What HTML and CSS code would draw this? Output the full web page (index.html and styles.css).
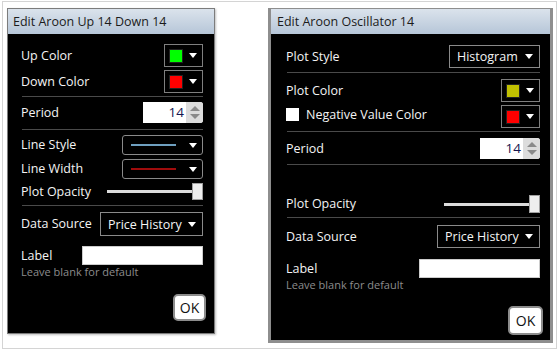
FILE: index.html
```html
<!DOCTYPE html>
<html lang="en">
<head>
    <meta charset="UTF-8">
    <title>Aroon dialogs</title>
    <link rel="stylesheet" href="styles.css">
</head>
<body>
<div class="screen">
    <div class="dialog dlg-left">
        <div class="titlebar">Edit Aroon Up 14 Down 14</div>
        <div class="body">
            <div class="row h23 mt10">
                <span class="lbl">Up Color</span>
                <div class="swatch"><i class="chip" style="background:#00ff00"></i><b class="caret"></b></div>
            </div>
            <div class="row h23 mt3">
                <span class="lbl">Down Color</span>
                <div class="swatch"><i class="chip" style="background:#ff0000"></i><b class="caret"></b></div>
            </div>
            <div class="sep mt3"></div>
            <div class="row h21 mt5">
                <span class="lbl">Period</span>
                <div class="spin"><span class="num">14</span><span class="arrows"><b class="up"></b><b class="down"></b></span></div>
            </div>
            <div class="sep mt6"></div>
            <div class="row h20 mt5">
                <span class="lbl">Line Style</span>
                <div class="linepick"><i class="stroke" style="background:#6e9fbf"></i><b class="caret"></b></div>
            </div>
            <div class="row h20 mt4">
                <span class="lbl">Line Width</span>
                <div class="linepick"><i class="stroke" style="background:#a00c0c"></i><b class="caret"></b></div>
            </div>
            <div class="row h17 mt4">
                <span class="lbl">Plot Opacity</span>
                <div class="slider"><span class="track"></span><span class="thumb"></span></div>
            </div>
            <div class="sep mt5"></div>
            <div class="row h24 mt6">
                <span class="lbl">Data Source</span>
                <div class="select w102"><span>Price History</span><b class="caret"></b></div>
            </div>
            <div class="row h19 mt10">
                <span class="lbl">Label</span>
                <div class="textbox w120"></div>
            </div>
            <div class="hint">Leave blank for default</div>
            <div class="foot mt16"><button class="ok">OK</button></div>
        </div>
    </div>

    <div class="dialog dlg-right">
        <div class="titlebar">Edit Aroon Oscillator 14</div>
        <div class="body">
            <div class="row h23 mt11">
                <span class="lbl">Plot Style</span>
                <div class="select w90"><span>Histogram</span><b class="caret"></b></div>
            </div>
            <div class="sep mt4"></div>
            <div class="row h23 mt6">
                <span class="lbl">Plot Color</span>
                <div class="swatch"><i class="chip" style="background:#c0c000"></i><b class="caret"></b></div>
            </div>
            <div class="row h23 mt3">
                <span class="lbl raised"><span class="check"></span>Negative Value Color</span>
                <div class="swatch"><i class="chip" style="background:#ff0000"></i><b class="caret"></b></div>
            </div>
            <div class="sep mt3"></div>
            <div class="row h21 mt6">
                <span class="lbl">Period</span>
                <div class="spin"><span class="num">14</span><span class="arrows"><b class="up"></b><b class="down"></b></span></div>
            </div>
            <div class="sep mt5"></div>
            <div class="row h18 mt30">
                <span class="lbl">Plot Opacity</span>
                <div class="slider"><span class="track"></span><span class="thumb"></span></div>
            </div>
            <div class="sep mt4"></div>
            <div class="row h23 mt7">
                <span class="lbl">Data Source</span>
                <div class="select w102"><span>Price History</span><b class="caret"></b></div>
            </div>
            <div class="row h19 mt11">
                <span class="lbl">Label</span>
                <div class="textbox w120"></div>
            </div>
            <div class="hint">Leave blank for default</div>
            <div class="foot mt15"><button class="ok big">OK</button></div>
        </div>
    </div>
</div>
</body>
</html>
```

FILE: styles.css
```css
*{
    margin: 0;
    padding: 0;
    box-sizing: border-box;
}
body{
    background: #fff;
    font-family: "Open Sans", "Noto Sans", sans-serif;
    font-size: 12.5px;
}
.screen{
    width: 555px;
    height: 348px;
    margin: 1px 0 0 2px;
    border: solid 1px #d4d4d4;
    display: flex;
    align-items: flex-start;
    padding: 6px 0 0 4px;
}
.dialog{
    background: #000;
    display: flex;
    flex-direction: column;
}
.dlg-left{
    width: 208px;
    height: 326px;
    border: solid 1px #7c7c7c;
    box-shadow: 1px 1px 2px rgba(0,0,0,.25);
}
.dlg-right{
    width: 285px;
    height: 335px;
    margin-left: 53px;
    border: solid 3px #8e8e8e;
    border-top-width: 1px;
}
.titlebar{
    height: 25px;
    line-height: 25px;
    padding-left: 5px;
    color: #1b1b1b;
    font-size: 12.5px;
    background: linear-gradient(#dbe3ec, #b6c6d8);
    white-space: nowrap;
}
.dlg-right .titlebar{
    padding-left: 6px;
}
.body{
    flex: 1;
    padding: 0 11px 0 13px;
    display: flex;
    flex-direction: column;
}
.dlg-right .body{
    padding: 0 10px 0 15px;
}
.row{
    display: flex;
    align-items: center;
    justify-content: space-between;
    color: #f4f4f4;
}
.lbl{
    display: flex;
    align-items: center;
    white-space: nowrap;
    padding-bottom: 1px;
}
.lbl.raised{
    padding-bottom: 4px;
}
.h17{ height: 17px; }
.h18{ height: 18px; }
.h19{ height: 19px; }
.h20{ height: 20px; }
.h21{ height: 21px; }
.h23{ height: 23px; }
.h24{ height: 24px; }
.mt3{ margin-top: 3px; }
.mt4{ margin-top: 4px; }
.mt5{ margin-top: 5px; }
.mt6{ margin-top: 6px; }
.mt7{ margin-top: 7px; }
.mt10{ margin-top: 10px; }
.mt11{ margin-top: 11px; }
.mt15{ margin-top: 15px; }
.mt16{ margin-top: 16px; }
.mt30{ margin-top: 30px; }
.sep{
    height: 1px;
    background: #4a4a4a;
    margin-left: 1px;
}
.caret{
    display: block;
    width: 0;
    height: 0;
    border-left: 4px solid transparent;
    border-right: 4px solid transparent;
    border-top: 5px solid #fff;
}
.swatch{
    width: 39px;
    height: 100%;
    border: solid 1px #7f7f7f;
    display: flex;
    align-items: center;
    padding: 0 5px 0 4px;
    justify-content: space-between;
}
.chip{
    display: block;
    width: 14px;
    height: 14px;
    border: solid 1px #222;
}
.spin{
    width: 60px;
    height: 100%;
    display: flex;
    background: #fff;
    border-radius: 0 3px 3px 0;
    overflow: hidden;
}
.num{
    flex: 1;
    text-align: right;
    padding-right: 2px;
    color: #161650;
    font-size: 13.5px;
    line-height: 21px;
}
.arrows{
    width: 17px;
    background: #dcdcdc;
    display: flex;
    flex-direction: column;
    align-items: center;
    justify-content: space-around;
    padding: 3px 0;
}
.arrows b{
    display: block;
    width: 0;
    height: 0;
    border-left: 5px solid transparent;
    border-right: 5px solid transparent;
}
.arrows .up{
    border-bottom: 5px solid #8a8a8a;
}
.arrows .down{
    border-top: 5px solid #8a8a8a;
}
.linepick{
    width: 81px;
    height: 100%;
    border: solid 1px #8a8a8a;
    border-radius: 3px;
    display: flex;
    align-items: center;
    padding: 0 5px 0 8px;
    justify-content: space-between;
}
.stroke{
    display: block;
    width: 45px;
    height: 2px;
}
.slider{
    width: 96px;
    height: 100%;
    display: flex;
    align-items: center;
}
.track{
    flex: 1;
    height: 3px;
    background: #dcdcdc;
}
.thumb{
    width: 11px;
    height: 100%;
    background: #eee;
    border: solid 1px #a0a0a0;
}
.select{
    height: 100%;
    border: solid 1px #8a8a8a;
    display: flex;
    align-items: center;
    justify-content: space-between;
    padding: 0 6px 0 7px;
    white-space: nowrap;
}
.w90{ width: 91px; }
.w102{ width: 103px; }
.textbox{
    height: 100%;
    background: #fff;
    border: solid 1px #ccc;
}
.w120{ width: 121px; }
.check{
    display: inline-block;
    width: 13px;
    height: 13px;
    background: #fff;
    margin-right: 7px;
}
.hint{
    color: #8c8c8c;
    font-size: 11px;
    line-height: 13px;
}
.foot{
    display: flex;
    justify-content: flex-end;
    margin-right: -3px;
}
.ok{
    width: 33px;
    height: 27px;
    background: #fff;
    border: solid 2px #8c8c8c;
    border-radius: 5px;
    font-family: "Open Sans", "Noto Sans", sans-serif;
    font-size: 14px;
    color: #111;
}
.ok.big{
    width: 35px;
    height: 29px;
}
```
